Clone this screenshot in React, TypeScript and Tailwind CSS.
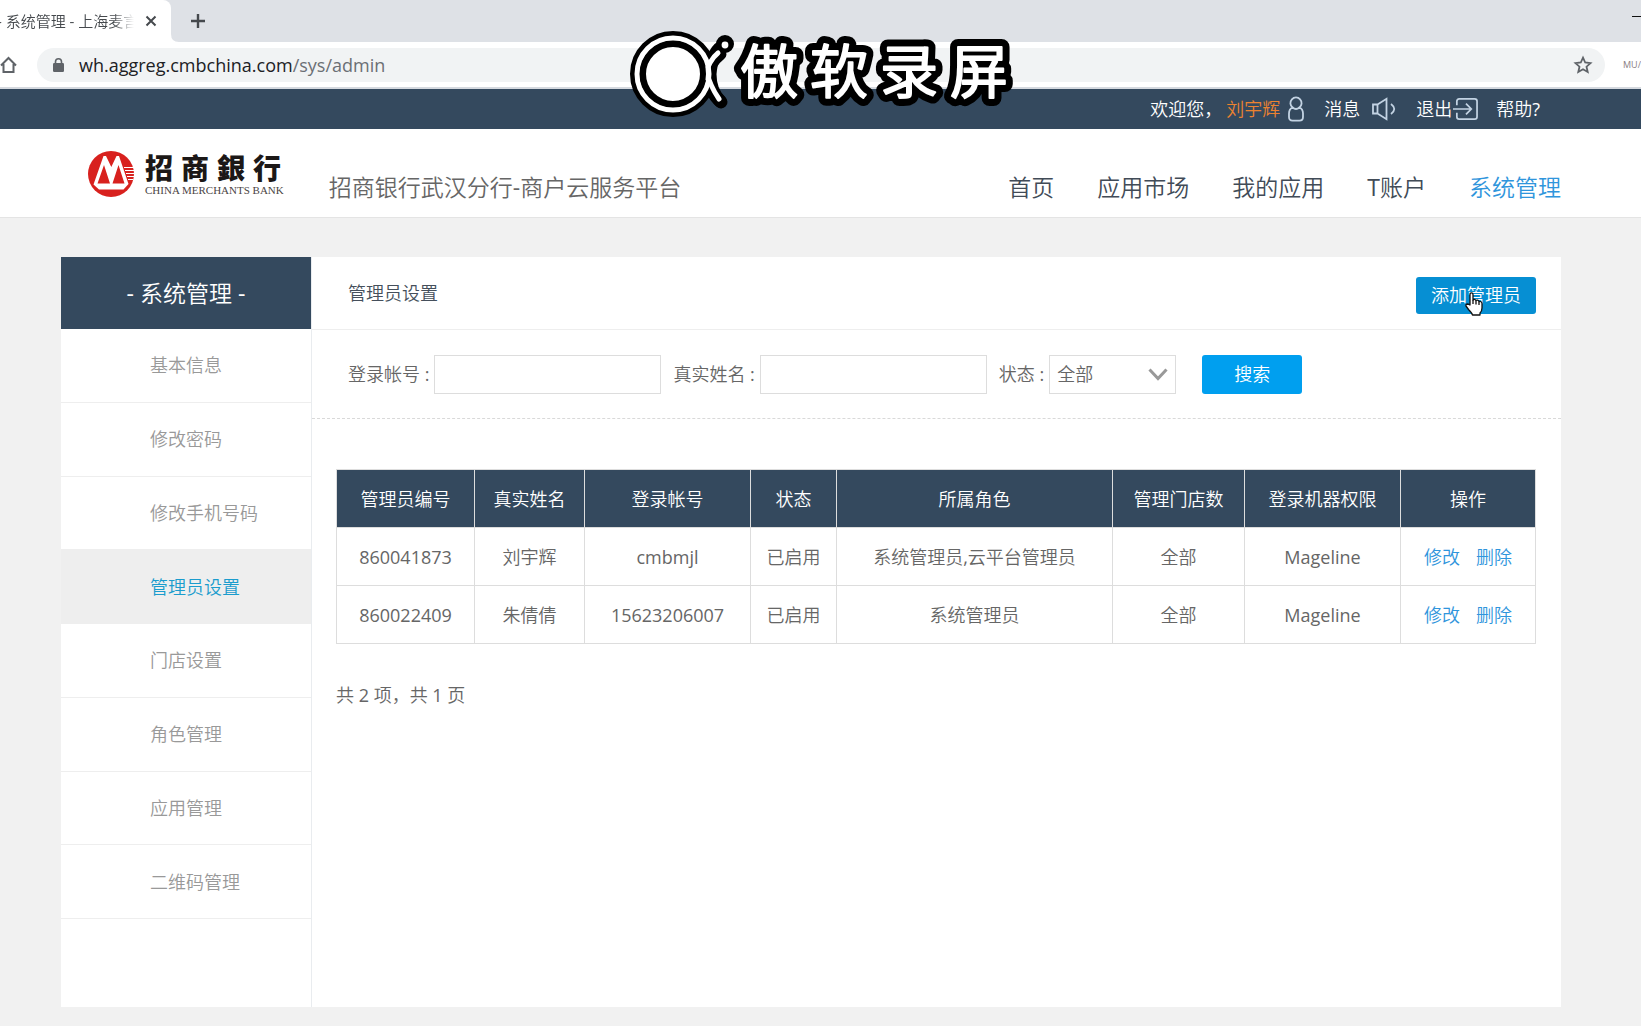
import { useState } from "react";

type Admin = {
  id: string;
  name: string;
  account: string;
  status: string;
  role: string;
  stores: string;
  machine: string;
};

const navItems = ["首页", "应用市场", "我的应用", "T账户", "系统管理"];

const menuItems = [
  "基本信息",
  "修改密码",
  "修改手机号码",
  "管理员设置",
  "门店设置",
  "角色管理",
  "应用管理",
  "二维码管理",
];

const columns = [
  { label: "管理员编号", width: "w-[138px]" },
  { label: "真实姓名", width: "w-[110px]" },
  { label: "登录帐号", width: "w-[166px]" },
  { label: "状态", width: "w-[86px]" },
  { label: "所属角色", width: "w-[276px]" },
  { label: "管理门店数", width: "w-[132px]" },
  { label: "登录机器权限", width: "w-[156px]" },
  { label: "操作", width: "w-[135px]" },
];

const admins: Admin[] = [
  {
    id: "860041873",
    name: "刘宇辉",
    account: "cmbmjl",
    status: "已启用",
    role: "系统管理员,云平台管理员",
    stores: "全部",
    machine: "Mageline",
  },
  {
    id: "860022409",
    name: "朱倩倩",
    account: "15623206007",
    status: "已启用",
    role: "系统管理员",
    stores: "全部",
    machine: "Mageline",
  },
];

function BrowserChrome() {
  return (
    <div className="bg-white">
      <div className="flex h-[42px] items-stretch justify-between bg-[#dee1e6]">
        <div className="flex">
          <div className="flex w-[171px] items-center justify-between rounded-tr-lg bg-white pr-[14px] text-[15px] text-[#45494d]">
            <span className="-ml-[3px] w-[137px] overflow-hidden whitespace-nowrap [mask-image:linear-gradient(to_right,black_85%,transparent)]">
              - 系统管理 - 上海麦言
            </span>
            <button aria-label="关闭标签页">
              <svg width="12" height="12" viewBox="0 0 12 12" stroke="#45494d" strokeWidth="2">
                <path d="M1.5 1.5 L10.5 10.5 M10.5 1.5 L1.5 10.5" />
              </svg>
            </button>
          </div>
          <svg className="self-end" width="8" height="8" viewBox="0 0 8 8">
            <path d="M0 0 Q0 8 8 8 H0 Z" fill="#fff" />
          </svg>
          <button aria-label="新建标签页" className="ml-3">
            <svg width="14" height="14" viewBox="0 0 14 14" stroke="#45494d" strokeWidth="2.4">
              <path d="M7 0 V14 M0 7 H14" />
            </svg>
          </button>
        </div>
        <button aria-label="最小化" className="mb-2">
          <svg width="9" height="2" viewBox="0 0 9 2">
            <path d="M0 0.5 H9" stroke="#111" />
          </svg>
        </button>
      </div>

      <div className="flex h-[47px] items-center overflow-hidden border-b-2 border-[#d5d9df] whitespace-nowrap">
        <button aria-label="主页" className="w-[37px]">
          <svg width="18" height="18" viewBox="0 0 18 18" fill="none" stroke="#5f6368" strokeWidth="2">
            <path d="M1 9.5 L8.5 2 L16 9.5 M3.5 8 V16 H13.5 V8" />
          </svg>
        </button>
        <div className="flex h-[34px] flex-1 items-center rounded-full bg-[#f1f3f4] pr-3 pl-4">
          <svg width="11" height="14" viewBox="0 0 11 14">
            <rect x="0" y="5" width="11" height="9" rx="1.2" fill="#5f6368" />
            <path d="M2.5 6 V3.8 A3 3 0 0 1 8.5 3.8 V6" fill="none" stroke="#5f6368" strokeWidth="1.6" />
          </svg>
          <p className="ml-[15px] flex-1 text-lg text-[#202124]">
            wh.aggreg.cmbchina.com<span className="text-[#6b6f74]">/sys/admin</span>
          </p>
          <button aria-label="收藏">
            <svg width="20" height="20" viewBox="0 0 20 20" fill="none" stroke="#5f6368" strokeWidth="1.8">
              <path d="M10 2.6 L12.2 7.5 L17.5 8.1 L13.5 11.7 L14.7 17 L10 14.2 L5.3 17 L6.5 11.7 L2.5 8.1 L7.8 7.5 Z" />
            </svg>
          </button>
        </div>
        <span className="ml-[18px] w-[18px] text-[9px] text-[#8a8083]">MU/F</span>
      </div>
    </div>
  );
}

function TopBar() {
  return (
    <div className="flex h-10 items-center justify-end bg-[#34495e] pr-[101px] text-lg text-white">
      <span>欢迎您&#65292;</span>
      <a href="#" className="ml-1 flex items-center gap-2 text-[#ec8230]">
        刘宇辉
        <svg width="16" height="26" viewBox="0 0 16 26" fill="none" stroke="#c3d3e3" strokeWidth="1.8">
          <path d="M4.6 11.5 A5.6 5.6 0 1 1 11.4 11.5 C14 12.6 15 14.5 15 17.5 V21 Q15 24.6 11.5 24.6 H4.5 Q1 24.6 1 21 V17.5 C1 14.5 2 12.6 4.6 11.5 Z M4.6 11.5 Q8 14.6 11.4 11.5" />
        </svg>
      </a>
      <a href="#" className="ml-5 flex items-center gap-3">
        消息
        <svg width="24" height="24" viewBox="0 0 24 24" fill="none" stroke="#c3d3e3" strokeWidth="1.8">
          <path d="M1 7.5 H5.5 V16.5 H1 Z M5.5 7.5 L14.5 1.8 V22.2 L5.5 16.5 M19 7 Q25.5 12 19 17" />
        </svg>
      </a>
      <a href="#" className="ml-5 flex items-center gap-px">
        退出
        <svg width="25" height="24" viewBox="0 0 26 24" fill="none" stroke="#c3d3e3" strokeWidth="1.8">
          <path d="M4 8 V4 Q4 1.5 6.5 1.5 H22.5 Q25 1.5 25 4 V20 Q25 22.5 22.5 22.5 H6.5 Q4 22.5 4 20 V16 M0 12 H19 M13.5 6.5 L19 12 L13.5 17.5" />
        </svg>
      </a>
      <a href="#" className="ml-[18px]">帮助?</a>
    </div>
  );
}

function BankLogo() {
  return (
    <a href="#" className="flex items-center gap-[11px]">
      <svg width="46" height="46" viewBox="0 0 46 46">
        <circle cx="23" cy="23" r="23" fill="#d8211e" />
        <path d="M36 16.5 H46 M37 19.5 H46 M38 22.5 H46 M39 25.5 H46 M40 28.5 H45" stroke="#fff" strokeWidth="1.2" />
        <path d="M5.5 33.5 L15.5 5 H18 L23.3 16 L28.5 5 H31 L40.5 33 L35.5 38.5 H11 Z" fill="#fff" />
        <path d="M9.5 32.5 L16 14 L22 32.5 Z M24.5 32.5 L30.5 14 L36.5 32.5 Z" fill="#d8211e" />
      </svg>
      <div className="text-[#1c1817]">
        <p className="flex gap-[8px] font-['Noto_Sans_CJK_SC',sans-serif] text-[28px] leading-[32px] font-black">
          <span>招</span>
          <span>商</span>
          <span>銀</span>
          <span>行</span>
        </p>
        <p className="font-['Liberation_Serif',serif] text-[11px] leading-[14px] whitespace-nowrap text-[#4a4544]">
          CHINA MERCHANTS BANK
        </p>
      </div>
    </a>
  );
}

function Header() {
  return (
    <header className="flex h-[89px] items-start justify-between border-b border-[#e4e4e4] bg-white pr-20 pl-[88px]">
      <div className="flex">
        <div className="pt-[22px]">
          <BankLogo />
        </div>
        <h1 className="ml-[45px] pt-10 text-[23px] leading-9 text-[#666]">招商银行武汉分行-商户云服务平台</h1>
      </div>
      <nav className="flex gap-[43px] pt-10 text-[23px] leading-9 text-[#414b57]">
        {navItems.map((item) => (
          <a key={item} href="#" className={item === "系统管理" ? "text-[#2f95dc]" : ""}>
            {item}
          </a>
        ))}
      </nav>
    </header>
  );
}

function Sidebar() {
  return (
    <aside className="w-[251px] shrink-0 border-r border-[#e9ecef]">
      <h2 className="flex h-[72px] items-center justify-center bg-[#34495e] text-[23px] text-white">- 系统管理 -</h2>
      <ul className="flex h-[590px] flex-col text-lg text-[#999]">
        {menuItems.map((item) => (
          <li key={item} className="flex-1 border-b border-[#eee]">
            <a
              href="#"
              className={`flex h-full items-center pl-[89px] ${
                item === "管理员设置" ? "bg-[#eeeeee] text-[#1a9ccd]" : ""
              }`}
            >
              {item}
            </a>
          </li>
        ))}
      </ul>
    </aside>
  );
}

function SearchForm() {
  const [account, setAccount] = useState("");
  const [realName, setRealName] = useState("");
  const [status, setStatus] = useState("全部");

  return (
    <form
      onSubmit={(e) => e.preventDefault()}
      className="flex h-[89px] items-center border-b border-dashed border-[#d9d9d9] pl-9 text-lg text-[#666]"
    >
      <label htmlFor="account" className="mr-[5px]">登录帐号 :</label>
      <input
        id="account"
        value={account}
        onChange={(e) => setAccount(e.target.value)}
        className="h-[39px] w-[227px] border border-[#ddd] px-2 outline-none"
      />
      <label htmlFor="realName" className="mr-[5px] ml-3">真实姓名 :</label>
      <input
        id="realName"
        value={realName}
        onChange={(e) => setRealName(e.target.value)}
        className="h-[39px] w-[227px] border border-[#ddd] px-2 outline-none"
      />
      <label htmlFor="status" className="mr-[5px] ml-3">状态 :</label>
      <div className="relative">
        <select
          id="status"
          value={status}
          onChange={(e) => setStatus(e.target.value)}
          className="h-[39px] w-[127px] appearance-none border border-[#ddd] bg-white pl-[7px] outline-none"
        >
          <option>全部</option>
          <option>已启用</option>
          <option>已停用</option>
        </select>
        <svg
          className="pointer-events-none absolute top-3 right-2"
          width="20"
          height="15"
          viewBox="0 0 20 15"
          fill="none"
          stroke="#999"
          strokeWidth="3"
        >
          <path d="M1.5 2.5 L10 11.5 L18.5 2.5" />
        </svg>
      </div>
      <button type="submit" className="ml-[26px] h-[39px] w-[100px] rounded-[3px] bg-[#009fef] text-white">
        搜索
      </button>
    </form>
  );
}

function AdminTable() {
  return (
    <table className="w-full table-fixed border-collapse text-center text-lg text-[#666]">
      <thead>
        <tr className="h-[58px] bg-[#34495e] text-white">
          {columns.map((col) => (
            <th key={col.label} className={`${col.width} border border-[#ddd] font-normal`}>
              {col.label}
            </th>
          ))}
        </tr>
      </thead>
      <tbody>
        {admins.map((admin) => (
          <tr key={admin.id} className="h-[58px]">
            <td className="border border-[#ddd]">{admin.id}</td>
            <td className="border border-[#ddd]">{admin.name}</td>
            <td className="border border-[#ddd]">{admin.account}</td>
            <td className="border border-[#ddd]">{admin.status}</td>
            <td className="border border-[#ddd]">{admin.role}</td>
            <td className="border border-[#ddd]">{admin.stores}</td>
            <td className="border border-[#ddd]">{admin.machine}</td>
            <td className="border border-[#ddd] text-[#2f95dc]">
              <div className="flex justify-center gap-4">
                <a href="#">修改</a>
                <a href="#">删除</a>
              </div>
            </td>
          </tr>
        ))}
      </tbody>
    </table>
  );
}

// Screen recorder badge that floats over the browser
function Watermark() {
  return (
    <svg
      className="pointer-events-none absolute top-[28px] left-[628px]"
      width="390"
      height="90"
      viewBox="0 0 390 90"
      fill="none"
      strokeLinecap="round"
      strokeLinejoin="round"
    >
      <defs>
        <g id="badge-name" fontSize="58">
          <text x="112" y="65">傲</text>
          <text x="182" y="65">软</text>
          <text x="252" y="65">录</text>
          <text x="322" y="65">屏</text>
        </g>
      </defs>
      <g stroke="#000">
        <circle cx="45" cy="46" r="36" strokeWidth="14" />
        <path d="M97 17 Q84 22 82 46 Q82 64 93 74" strokeWidth="13" />
        <path d="M92 26 Q82 34 79 46 Q82 64 92 73" strokeWidth="13" />
        <circle cx="97" cy="16" r="5" strokeWidth="8" />
      </g>
      <path d="M90 25 Q81 32 76 50 M78 42 Q82 58 91 71" stroke="#fff" strokeWidth="5" />
      <circle cx="45" cy="46" r="36" stroke="#fff" strokeWidth="5" />
      <circle cx="45" cy="46" r="30" fill="#fff" stroke="#000" strokeWidth="6" />
      <circle cx="97" cy="17" r="3.4" fill="#fff" />
      <use href="#badge-name" stroke="#000" strokeWidth="16" />
      <use href="#badge-name" fill="#fff" stroke="#fff" strokeWidth="2" />
    </svg>
  );
}

export default function App() {
  return (
    <div className="relative min-h-screen overflow-hidden bg-[#f1f1f1] font-['Open_Sans','Noto_Sans_CJK_SC_DemiLight','Noto_Sans_CJK_SC_Light','Noto_Sans_CJK_SC',sans-serif]">
      <BrowserChrome />
      <TopBar />
      <Header />

      <div className="mt-[39px] mr-20 mb-[19px] ml-[61px] flex min-h-[750px] bg-white">
        <Sidebar />
        <main className="min-w-0 flex-1">
          <div className="flex h-[73px] items-center justify-between border-b border-[#eee] pr-[25px] pl-9">
            <h2 className="text-lg text-[#454f5b]">管理员设置</h2>
            <button className="relative mt-1 h-[37px] w-[120px] rounded-[3px] bg-[#068fd3] text-lg text-white">
              添加管理员
              <svg
                className="absolute top-[15px] left-[49px]"
                width="20"
                height="24"
                viewBox="0 0 20 24"
                fill="#fff"
                stroke="#111"
                strokeWidth="1.3"
                strokeLinejoin="round"
              >
                <path d="M5 13 V2.5 Q5 0.8 6.5 0.8 Q8 0.8 8 2.5 V8 Q9.5 6.5 11 8.5 Q12.7 7.4 14 9.6 Q16.6 8.8 17 11.5 V16 Q17 19 15 21 V23 H7.5 Q7 21 3.5 17.5 L1 14 Q0.6 12 2.5 12 Q4 12.3 5 13 Z" />
                <path d="M8 8 V12 M11 9 V12.5 M14 10 V13" />
              </svg>
            </button>
          </div>
          <SearchForm />
          <div className="pt-[50px] pr-[26px] pl-6">
            <AdminTable />
            <p className="mt-[37px] text-lg text-[#666]">共 2 项&#65292;共 1 页</p>
          </div>
        </main>
      </div>

      <Watermark />
    </div>
  );
}
